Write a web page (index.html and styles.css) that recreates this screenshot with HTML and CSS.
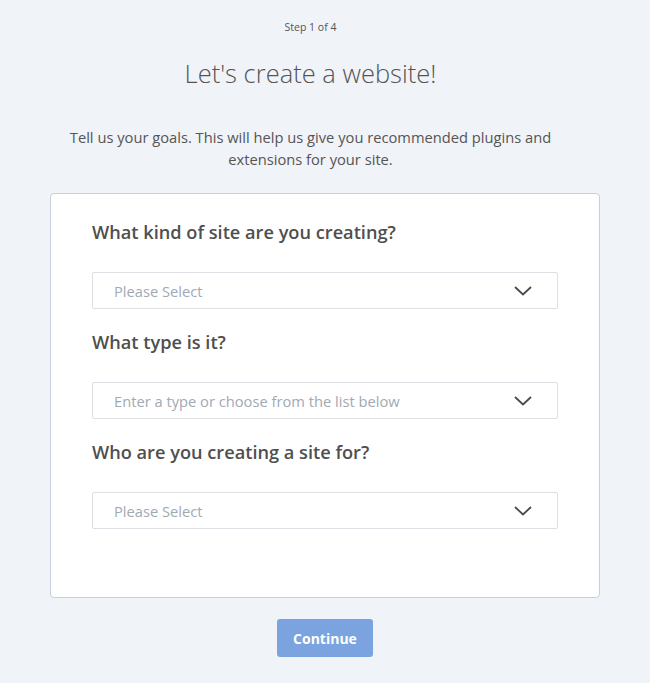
FILE: index.html
```html
<!DOCTYPE html>
<html lang="en">
<head>
<meta charset="utf-8">
<title>Let's create a website!</title>
<link rel="stylesheet" href="styles.css">
</head>
<body>
<main class="page">
  <header class="intro">
    <p class="step">Step 1 of 4</p>
    <h1 class="title">Let's create a website!</h1>
    <p class="lead">Tell us your goals. This will help us give you recommended plugins and extensions for your site.</p>
  </header>
  <section class="card">
    <div class="field">
      <h2 class="label">What kind of site are you creating?</h2>
      <div class="select">
        <span class="placeholder">Please Select</span>
        <svg class="chev" width="18" height="10" viewBox="0 0 18 10"><path d="M1 1l8 7.5L17 1" fill="none" stroke="#4a4a4a" stroke-width="1.8"/></svg>
      </div>
    </div>
    <div class="field">
      <h2 class="label">What type is it?</h2>
      <div class="select">
        <span class="placeholder">Enter a type or choose from the list below</span>
        <svg class="chev" width="18" height="10" viewBox="0 0 18 10"><path d="M1 1l8 7.5L17 1" fill="none" stroke="#4a4a4a" stroke-width="1.8"/></svg>
      </div>
    </div>
    <div class="field">
      <h2 class="label">Who are you creating a site for?</h2>
      <div class="select">
        <span class="placeholder">Please Select</span>
        <svg class="chev" width="18" height="10" viewBox="0 0 18 10"><path d="M1 1l8 7.5L17 1" fill="none" stroke="#4a4a4a" stroke-width="1.8"/></svg>
      </div>
    </div>
  </section>
  <div class="actions">
    <button class="btn" type="button">Continue</button>
  </div>
</main>
</body>
</html>
```
FILE: styles.css
```css
html, body {
  margin: 0;
  padding: 0;
  background: #f0f3f8;
}
body {
  font-family: "Open Sans", "Noto Sans", sans-serif;
  color: #555;
}
.page {
  width: 650px;
  display: flex;
  flex-direction: column;
  align-items: center;
}
.intro {
  display: flex;
  flex-direction: column;
  align-items: center;
  padding-right: 29px;
  box-sizing: border-box;
  width: 650px;
  text-align: center;
}
.step {
  margin: 19px 0 0;
  font-size: 10.5px;
  line-height: 16px;
  color: #555;
}
.title {
  margin: 20px 0 0;
  font-weight: 300;
  font-size: 25.5px;
  line-height: 36px;
  color: #555;
}
.lead {
  margin: 35px 0 0;
  font-size: 14.7px;
  line-height: 22px;
  color: #555;
  width: 500px;
}
.card {
  margin-top: 23px;
  width: 550px;
  height: 405px;
  box-sizing: border-box;
  background: #fff;
  border: 1px solid #c6cfda;
  border-radius: 4px;
  padding: 26px 41px 0 41px;
  display: flex;
  flex-direction: column;
  gap: 21px;
}
.field {
  display: flex;
  flex-direction: column;
  gap: 28px;
}
.label {
  margin: 0;
  font-size: 18.2px;
  line-height: 24px;
  font-weight: 600;
  color: #4f4f4f;
}
.select {
  height: 37px;
  box-sizing: border-box;
  border: 1px solid #dcdfe3;
  border-radius: 2px;
  display: flex;
  align-items: center;
  justify-content: space-between;
  padding: 0 25px 0 21px;
}
.placeholder {
  font-size: 14.7px;
  color: #a1a9b3;
}
.actions {
  margin-top: 21px;
  display: flex;
  justify-content: center;
}
.btn {
  width: 96px;
  height: 38px;
  border: 0;
  border-radius: 3px;
  background: #7aa3e0;
  color: #fff;
  font-family: "Open Sans", "Noto Sans", sans-serif;
  font-size: 14px;
  font-weight: 700;
  padding: 0;
}
```
